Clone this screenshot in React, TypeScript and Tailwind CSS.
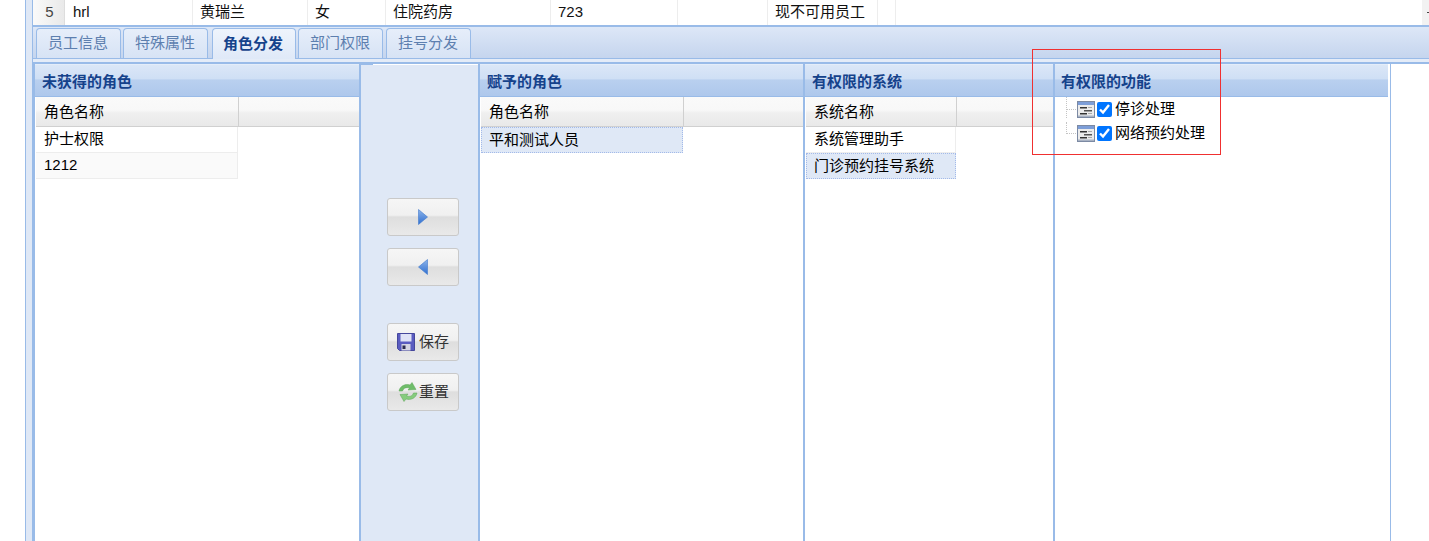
const tabs = ["员工信息", "特殊属性", "角色分发", "部门权限", "挂号分发"];

const topCells = [
  { width: "w-[128px]", text: "hrl", pad: "pl-2" },
  { width: "w-[115px]", text: "黄瑞兰", pad: "pl-[7px]" },
  { width: "w-[78px]", text: "女", pad: "pl-[7px]" },
  { width: "w-[165px]", text: "住院药房", pad: "pl-[7px]" },
  { width: "w-[127px]", text: "723", pad: "pl-[7px]" },
  { width: "w-[90px]", text: "", pad: "" },
  { width: "w-[110px]", text: "现不可用员工", pad: "pl-[7px]" },
  { width: "w-[18px]", text: "", pad: "" },
];

function PanelHeader({ title, pad }: { title: string; pad: string }) {
  return (
    <div className={`${pad} flex h-[33px] shrink-0 items-center border-b border-[#99bbe8] border-t border-t-[#e4edf9] bg-[linear-gradient(#dbe7f7,#cfdff5_45%,#b9d0ef_48%,#aec8ec)] pt-px text-[15px] leading-none font-bold text-[#15428b]`}>
      {title}
    </div>
  );
}

function GridHeader({ title, width }: { title: string; width: string }) {
  return (
    <div className="ml-px flex h-[30px] shrink-0 border-b border-[#d0d0d0] bg-[linear-gradient(#fafafa,#f8f8f8_45%,#efefef_55%,#e9e9e9)]">
      <div className={`${width} flex items-center border-r border-[#d0d0d0] pt-px pl-[8px] text-[15px] text-black`}>{title}</div>
    </div>
  );
}

function Row({ text, width, selected, alt }: { text: string; width: string; selected?: boolean; alt?: boolean }) {
  const look = selected
    ? "border border-dotted border-[#a3bae9] bg-[#dfe8f6] pl-[7px]"
    : alt
      ? "border-r border-b border-[#ededed] bg-[#fafafa] pl-2"
      : "border-r border-b border-[#ededed] bg-white pl-2";
  return (
    <div className={`${width} ${look} ml-px flex h-[26px] items-center text-[15px] text-black`}>{text}</div>
  );
}

function Arrow({ left }: { left?: boolean }) {
  return (
    <svg width="10" height="16" viewBox="0 0 10 16">
      <defs>
        <linearGradient id={left ? "al" : "ar"} x1="0" y1="0" x2="0" y2="1">
          <stop offset="0" stopColor="#8db4ea" />
          <stop offset="1" stopColor="#2f6fd0" />
        </linearGradient>
      </defs>
      <path d={left ? "M9.5 0.5V15.5L0.5 8Z" : "M0.5 0.5V15.5L9.5 8Z"} fill={`url(#${left ? "al" : "ar"})`} stroke="#3f78cf" strokeWidth="0.6" />
    </svg>
  );
}

function SaveIcon() {
  return (
    <svg width="18" height="18" viewBox="0 0 18 18" className="shrink-0">
      <path d="M0.500 0.500H17.500V17.500H2.500L0.500 15.500Z" fill="#5a5cc0" stroke="#45479c" />
      <rect x="3.500" y="1" width="11" height="7.500" fill="#dfe2f6" />
      <rect x="4.500" y="11" width="9" height="6.500" fill="#d4d4e2" />
      <rect x="5.500" y="12.500" width="3" height="3.500" fill="#2c2c50" />
    </svg>
  );
}

function ReloadIcon() {
  return (
    <svg width="22" height="20" viewBox="0 0 22 20" className="shrink-0">
      <path d="M2 9C3 4 8 1.500 13 3L15 0.500L19 7.500L11 8L12.500 6C9 5 6.500 6 5.500 9Z" fill="#6fbd6a" stroke="#5aa457" strokeWidth="0.500" />
      <path d="M20 11C19 16 14 18.500 9 17L7 19.500L3 12.500L11 12L9.500 14C13 15 15.500 14 16.500 11Z" fill="#86cc7e" stroke="#5aa457" strokeWidth="0.500" />
    </svg>
  );
}

function ToolButton({ children, className }: { children: React.ReactNode; className?: string }) {
  return (
    <div className={`flex h-[38px] w-[72px] items-center justify-center rounded-[3px] border border-[#c9c9c9] bg-[linear-gradient(#f6f6f6,#f0f0f0_45%,#dedede_50%,#e9e9e9)] text-[15px] text-[#333] ${className ?? ""}`}>
      {children}
    </div>
  );
}

function WindowIcon() {
  return (
    <svg width="18" height="17" viewBox="0 0 18 17" className="shrink-0">
      <rect x="0.500" y="0.500" width="17" height="16" fill="#ececec" stroke="#7c8aa3" />
      <rect x="1" y="1" width="16" height="3" fill="#7d9ed8" />
      <rect x="1" y="14.500" width="16" height="1.500" fill="#a9b3c4" />
      <rect x="3" y="6" width="7" height="1.500" fill="#333" />
      <rect x="11" y="6" width="4" height="1" fill="#aaa" />
      <rect x="7" y="9" width="8" height="1.500" fill="#555" />
      <rect x="3" y="12" width="7" height="1.500" fill="#333" />
      <rect x="11" y="12" width="4" height="1" fill="#aaa" />
    </svg>
  );
}

function TreeItem({ text, last }: { text: string; last?: boolean }) {
  return (
    <div className="flex h-[24px] items-center">
      <div className={`${last ? "mt-px h-[12px]" : "h-[21px]"} ml-[11px] w-0 self-start border-l border-dotted border-[#c4c4c4]`} />
      <div className="mr-px w-[9px] border-t border-dotted border-[#c4c4c4]" />
      <WindowIcon />
      <input type="checkbox" defaultChecked readOnly className="mr-[3px] ml-[2px] h-[15px] w-[15px] shrink-0" />
      <span className="text-[15px] text-black">{text}</span>
    </div>
  );
}

export default function App() {
  return (
    <div className="relative flex h-[541px] w-[1429px] overflow-hidden bg-white font-['Liberation_Sans','Noto_Sans_CJK_SC',sans-serif]">
      <div className="w-[25px] shrink-0" />
      <div className="w-[8px] shrink-0 border-x border-[#99bbe8] bg-[#dfe8f6]" />

      <div className="flex min-w-0 flex-1 flex-col">
        {/* last row of the staff grid */}
        <div className="flex h-[25px] shrink-0 items-center text-[15px] text-[#111]">
          <div className="flex h-full w-[32px] items-center justify-center border-r border-[#ddd] bg-[linear-gradient(90deg,#fafafa,#e9e9e9)] pl-[2px] text-[#444]">5</div>
          {topCells.map((c, i) => (
            <div key={i} className={`${c.width} ${c.pad} h-full border-r border-[#ededed] leading-[24px]`}>{c.text}</div>
          ))}
          <div className="flex-1" />
          <div className="flex h-full w-[7px] items-center justify-end bg-[#f2f2f2]">
            <div className="h-px w-[2px] bg-[#444]" />
          </div>
        </div>

        {/* tab strip */}
        <div className="flex h-[34px] shrink-0 items-end gap-[2px] border-t-2 border-b border-[#99bbe8] bg-[linear-gradient(#dde7f7,#c5d5ee)] pl-[3px]">
          {tabs.map((t, i) => (
            <div
              key={t}
              className={
                i === 2
                  ? "relative top-px ml-[2px] flex h-[31px] w-[84px] items-center justify-center rounded-t-[4px] border border-b-0 border-[#99bbe8] bg-[linear-gradient(#eef4fc,#dfe9f8)] pr-[2px] text-[15px] font-bold text-[#15428b]"
                  : `${i === 4 ? "ml-px" : ""} flex h-[30px] w-[85px] items-center justify-center rounded-t-[4px] border border-b-0 border-[#99bbe8] bg-[linear-gradient(#e6eefa,#d7e3f5)] pr-px text-[15px] text-[#5d7faf]`
              }
            >
              {t}
            </div>
          ))}
        </div>

        <div className="h-[3px] shrink-0 bg-[#e4ecf8]" />
        <div className="h-[2px] shrink-0 bg-[#99bbe8]" />

        {/* panels */}
        <div className="flex min-h-0 flex-1">
          <div className="flex w-[326px] shrink-0 flex-col border-l-2 border-[#99bbe8]">
            <PanelHeader title="未获得的角色" pad="pl-[7px]" />
            <GridHeader title="角色名称" width="w-[203px]" />
            <Row text="护士权限" width="w-[202px]" />
            <Row text="1212" width="w-[202px]" alt />
          </div>

          <div className="flex w-[121px] shrink-0 flex-col border-x-2 border-[#99bbe8] bg-[#dfe8f6]">
            <div className="flex h-px shrink-0">
              <div className="w-[12px] bg-[#99bbe8]" />
              <div className="flex-1 bg-white" />
            </div>
            <div className="flex flex-col pt-[133px] pl-[26px]">
              <ToolButton><Arrow /></ToolButton>
              <ToolButton className="mt-[12px]"><Arrow left /></ToolButton>
              <ToolButton className="mt-[37px] gap-[4px]"><SaveIcon />保存</ToolButton>
              <ToolButton className="mt-[12px]"><ReloadIcon />重置</ToolButton>
            </div>
          </div>

          <div className="flex w-[325px] shrink-0 flex-col border-r-2 border-[#99bbe8]">
            <PanelHeader title="赋予的角色" pad="pl-[7px]" />
            <GridHeader title="角色名称" width="w-[203px]" />
            <Row text="平和测试人员" width="w-[202px]" selected />
          </div>

          <div className="flex w-[250px] shrink-0 flex-col border-r-2 border-[#99bbe8]">
            <PanelHeader title="有权限的系统" pad="pl-[7px]" />
            <GridHeader title="系统名称" width="w-[151px]" />
            <Row text="系统管理助手" width="w-[150px]" />
            <Row text="门诊预约挂号系统" width="w-[150px]" selected />
          </div>

          <div className="flex w-[336px] shrink-0 flex-col border-r border-[#99bbe8] pr-[2px]">
            <PanelHeader title="有权限的功能" pad="pl-[6px]" />
            <div>
              <TreeItem text="停诊处理" />
              <TreeItem text="网络预约处理" last />
            </div>
          </div>
        </div>
      </div>

      {/* red annotation box */}
      <div className="absolute top-[49px] left-[1032px] h-[106px] w-[189px] border border-[#f03030]" />
    </div>
  );
}
